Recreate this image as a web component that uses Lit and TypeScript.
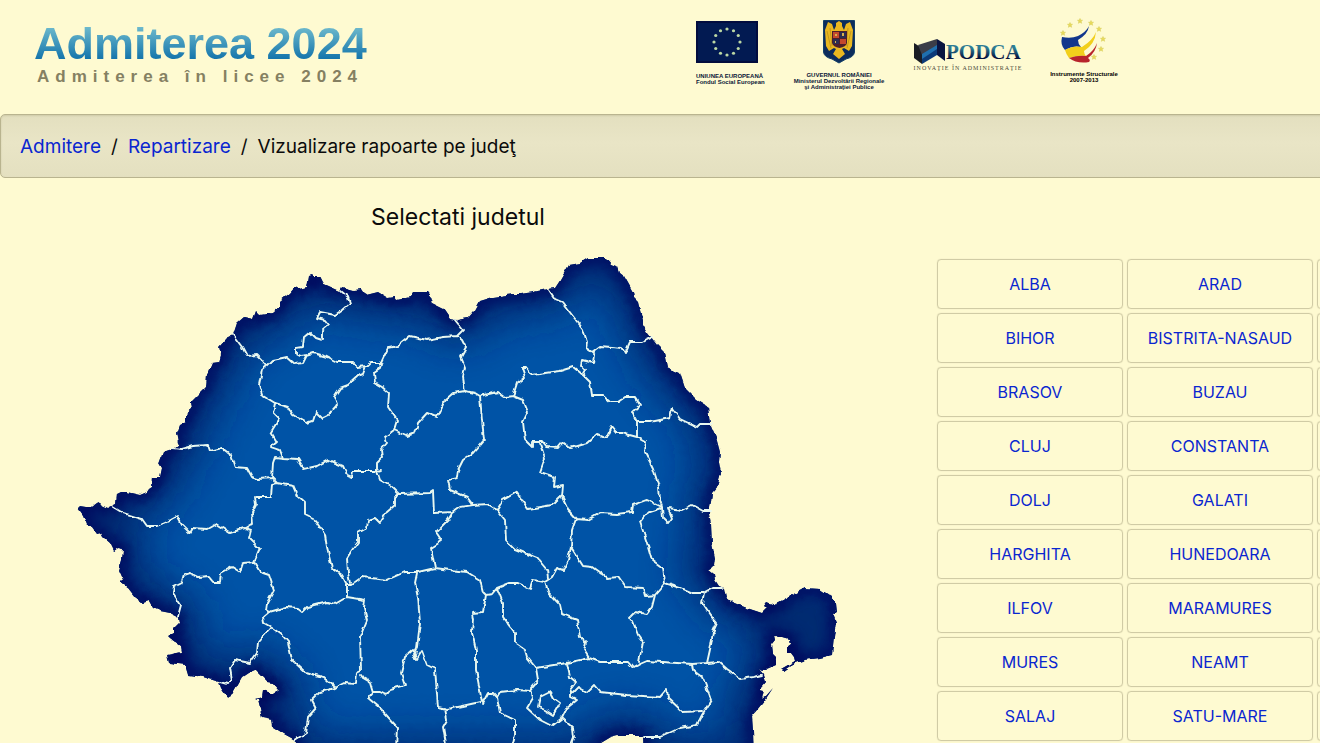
import { LitElement, html, css, svg } from "lit";
import { customElement } from "lit/decorators.js";

const COUNTIES: string[][] = [
  ["ALBA", "ARAD"],
  ["BIHOR", "BISTRITA-NASAUD"],
  ["BRASOV", "BUZAU"],
  ["CLUJ", "CONSTANTA"],
  ["DOLJ", "GALATI"],
  ["HARGHITA", "HUNEDOARA"],
  ["ILFOV", "MARAMURES"],
  ["MURES", "NEAMT"],
  ["SALAJ", "SATU-MARE"],
];

/* Country outline, clockwise from the western tip. */
const OUTLINE =
  "M78 508 80 506 86 507 92 507 96 504 98 503 103 506 108 508 112 506 116 504 117 494 121 492 127 492 131 493 140 495 147 492 149 489 152 487 153 477 160 477 162 468 159 463 163 452 172 449 179 443 177 433 180 425 186 422 186 415 192 410 191 402 200 393 206 387 207 375 212 363 219 362 221 355 219 347 227 338 233 335 237 323 244 317 253 319 256 311 260 315 273 313 280 307 280 301 290 293 295 287 299 289 307 287 309 275 312 274 315 277 319 277 322 283 340 291 342 287 353 290 362 289 366 295 378 292 388 298 395 297 397 300 410 297 413 292 427 292 431 297 433 304 443 309 450 319 457 320 468 318 475 310 480 301 493 297 513 294 520 294 533 292 547 289 555 288 559 282 563 275 569 265 580 263 588 258 607 258 612 264 617 266 619 272 624 276 628 283 633 292 634 298 638 302 640 310 643 320 643 325 647 332 651 337 657 345 664 352 667 367 673 370 680 373 685 388 697 400 708 407 710 423 716 437 720 452 719 462 721 473 717 487 712 493 711 503 709 513 711 523 712 543 715 558 714 566 709 569 714 573 715 580 719 586 724 588 726 597 732 602 747 608 762 613 767 608 764 606 767 602 777 606 779 602 790 596 805 588 820 589 832 597 836 603 837 612 833 614 836 622 834 637 832 655 820 658 805 660 793 664 783 671 781 669 795 661 794 657 791 653 787 653 787 647 791 644 790 639 783 637 777 637 774 635 775 640 771 645 772 653 777 658 776 665 762 671 759 669 764 675 766 682 760 689 764 690 762 699 766 696 773 688 765 700 757 710 752 716 753 730 754 760 644 760 643 737 635 735 627 735 618 735 610 737 600 743 596 760 302 760 295 740 284 734 273 727 272 719 262 717 258 700 255 699 262 697 263 690 273 694 279 690 273 683 267 682 255 670 248 673 242 677 230 698 227 697 221 688 219 682 203 677 188 675 185 665 169 663 167 655 182 652 181 646 170 638 168 636 174 633 174 628 179 623 178 617 170 613 160 611 153 608 149 601 143 603 135 597 128 588 120 582 123 579 119 570 122 560 123 549 118 548 114 551 110 543 103 537 101 533 97 534 92 527 87 525 83 515Z";

/* County boundaries drawn over the country shape. */
const BORDERS = [
  "233 335 242 347 247 356 257 355 262 360 267 366 273 360 287 357 295 364 303 363 307 355",
  "307 355 300 356 296 354 296 348 302 347 303 338 310 332 316 338 322 340 322 331 329 325 325 320 317 318 320 312 335 315 342 310 350 303 348 297 341 291",
  "307 355 313 353 327 357 337 362 352 362 357 367 367 366 370 363 381 363",
  "267 366 262 370 259 385 262 395 275 403 288 407 293 415 307 423 313 421 316 412 322 418 328 415 337 405 334 397 340 388 348 385 358 376 363 374 366 366",
  "275 403 273 413 279 419 271 432 277 442 271 447 280 450 283 458 298 459 304 469 317 466 328 460 343 466 347 475 352 477 353 471 377 471 381 470",
  "283 458 275 457 273 463 272 478",
  "172 448 182 449 193 446 208 445 210 451 222 448 231 455 235 467 247 468 252 477 258 479 272 478 277 483",
  "277 483 293 486 297 495 305 502 305 515 315 520 325 535 327 548 332 568 342 575 347 585 347 597",
  "277 483 272 484 271 497 255 497 256 505 252 513 253 523 245 528 251 530 249 538 260 549 254 562 260 572 269 575 274 590 267 603 266 610 269 612",
  "113 507 123 513 142 519 147 526 157 526 166 522 177 516 182 525 190 533 193 528 207 529 216 524 230 533 245 528",
  "254 562 243 563 240 572 232 567 221 573 220 582 213 582 208 576 198 577 190 573 184 575 182 582 174 586 173 593 181 605 178 616",
  "269 612 263 617 264 623 271 627 258 642 257 653 250 663 235 660 230 668 232 680 227 684 220 682",
  "271 627 282 635 288 642 292 660 305 672 323 677 335 688 320 692 312 700 316 708 308 717 306 733 295 740",
  "269 612 287 607 297 608 302 612 307 607 327 602 335 604 347 597 365 600 364 608 367 620 360 637 361 670 357 672 356 684 345 683 335 688",
  "361 675 363 678 370 682 373 692 380 692 386 695 390 689 405 685 401 673 405 657 413 650 415 658 417 652",
  "373 692 368 698 380 708 397 727 396 750",
  "417 573 415 583 418 597 420 623 417 647 413 655 417 659 422 651 427 665 435 669 438 707 447 709 462 706 480 702",
  "445 708 447 720 443 727 447 750",
  "347 585 351 585 362 577 387 580 405 572 418 572 435 568 450 570 467 572 480 580 483 592 486 595",
  "350 583 348 573 347 558 352 550 358 542 358 533 367 528 368 520 375 518 380 523 387 512 395 505 395 497 399 494",
  "377 471 380 480 392 487 399 494 430 493 433 491 434 513 453 512",
  "381 363 380 368 374 372 375 383 382 387 389 393 388 407 397 420 394 430 385 437 387 443 381 450 382 458 377 463 377 471",
  "381 363 388 348 398 346 410 336 427 340 443 337 457 336 463 330 455 320",
  "457 336 462 340 466 348 461 357 465 367 463 377 465 392",
  "394 430 407 436 415 433 418 423 427 413 437 417 445 400 453 393 465 391 475 393 480 396",
  "480 396 482 420 484 440 473 453 463 460 458 470 457 478 448 480 450 490 467 497 473 505",
  "480 396 493 393 498 392 505 397 513 396 517 383 525 377 522 368 527 368 532 375 560 371 573 367 583 375",
  "549 290 555 299 562 302 572 315 583 329 587 342 586 348 592 352 600 346 622 348 625 353 630 342 642 342 652 337",
  "592 352 595 355 594 363 582 360 581 365 586 370 583 375 590 382 592 395 602 395 610 402 618 402 625 397 635 397 640 405 632 412 637 422 637 437",
  "637 422 650 422 670 418 672 408 680 419 697 427 700 424 711 424",
  "637 437 622 433 617 433 612 427 607 438 597 434 587 443 570 448 563 442 558 448 547 447 543 442 532 442 532 447 525 440 523 422 528 412 523 400 513 396",
  "540 443 545 458 540 472 555 477 554 487 563 485 562 497 568 510 576 519",
  "637 437 646 442 645 452 653 468 659 487 660 500 662 507 663 518 668 523 672 518 668 508 682 510 692 505 703 511 711 511",
  "662 507 647 500 633 505 632 512 617 514 600 513 588 520 576 519",
  "662 508 647 513 640 522 647 543 652 560 663 568 665 583 680 588 692 593 704 593 713 588 722 588",
  "576 519 572 530 571 547 568 560 563 570 557 568 552 577 545 582 533 580 530 589 517 583 510 583 497 588 492 594 486 595",
  "571 547 576 555 583 566 592 567 607 578 618 577 625 587 643 588 645 596 655 595 665 583",
  "655 595 652 607 647 614 635 612 628 619 633 622 638 635 643 642 639 662",
  "545 582 548 592 560 605 562 614 577 620 580 637 586 642 584 650 589 658",
  "548 578 547 570 537 558 515 549 506 540 505 520 497 510 487 504 473 505 460 507 453 512 448 520 436 532 442 541 431 548 435 568",
  "497 510 503 500 517 492 528 509 552 505 562 495",
  "486 595 483 612 472 613 473 620 472 632 476 650 476 670 482 702",
  "497 588 503 603 503 617 515 633 515 643 525 650 527 657 536 668",
  "536 668 567 663 589 658 600 662 628 662 633 668 640 664 647 661 692 664 707 663 711 645 713 632 717 623 710 615 702 603 704 593",
  "707 663 718 662 727 670 740 679 753 677 762 675",
  "692 664 693 670 703 678 711 700 702 715 697 725 680 728 660 737 644 737",
  "567 663 570 677 576 682 570 690 572 693 578 687 587 692 594 685 600 692 627 695 660 697 667 689 668 698 683 712 702 711",
  "536 668 538 680 531 688 533 698 527 708 540 720 552 726 562 718 567 708 577 700 571 697 571 691",
  "540 697 550 692 553 698 560 703 553 715 545 710 538 707 540 697",
  "562 718 573 728 574 737 569 750",
  "531 691 517 690 500 692 497 697 493 693 488 693 482 704",
  "497 697 500 713 515 720 515 735 511 750",
];

const EU_STARS = Array.from({ length: 12 }, (_, i) => {
  const a = (i * Math.PI) / 6;
  return [31 + 13 * Math.sin(a), 21 - 13 * Math.cos(a)];
});

const STRUCT_STARS = [
  [4, 15], [11, 7], [21, 3], [32, 5], [40, 11], [44, 21], [42, 31], [35, 39],
];

@customElement("app-root")
export class AppRoot extends LitElement {
  static styles = css`
    :host {
      display: flex;
      flex-direction: column;
      height: 100vh;
      overflow: hidden;
      background: #fefad1;
      color: #0b0b0b;
      font-family: Inter, "Liberation Sans", sans-serif;
    }
    a {
      color: #0a26d0;
      text-decoration: none;
    }
    .header {
      display: grid;
      grid-template-columns: minmax(0, 174fr) minmax(0, 156fr);
      flex: none;
      height: 114px;
    }
    .brand {
      padding: 20px 0 0 34px;
      font-family: "Liberation Sans", Arial, sans-serif;
      font-weight: 700;
      white-space: nowrap;
    }
    .title {
      display: block;
      width: max-content;
      font-size: 45px;
      line-height: 48px;
      background: linear-gradient(#6db9cc 15%, #1676ac 80%);
      -webkit-background-clip: text;
      background-clip: text;
      color: transparent;
    }
    .subtitle {
      display: block;
      padding-left: 3px;
      font-size: 17px;
      line-height: 18px;
      letter-spacing: 6px;
      color: #858062;
    }
    .logos {
      display: flex;
      gap: 30px;
      padding-top: 18px;
    }
    .logo {
      display: flex;
      flex-direction: column;
      align-items: center;
      flex: none;
      margin: 0;
      font-family: "Liberation Sans", Arial, sans-serif;
      font-size: 6px;
      line-height: 6px;
      font-weight: 700;
      color: #0a1838;
      text-align: center;
      white-space: nowrap;
    }
    .logo svg {
      display: block;
    }
    .eu {
      width: 68px;
      align-items: flex-start;
      text-align: left;
      padding-top: 3px;
    }
    .eu figcaption {
      padding-top: 10px;
    }
    .gov {
      width: 90px;
    }
    .gov figcaption {
      padding-top: 8px;
    }
    .podca {
      width: 108px;
      padding-top: 20px;
    }
    .podca-word {
      font-family: "Liberation Serif", serif;
      font-size: 21px;
      font-weight: 700;
    }
    .podca figcaption {
      font-family: "Liberation Serif", serif;
      font-weight: 400;
      font-size: 6px;
      letter-spacing: 1px;
      color: #4a4a3c;
    }
    .struct {
      width: 64px;
      color: #000;
    }
    .struct figcaption {
      padding-top: 8px;
    }
    .crumbs {
      display: flex;
      align-items: center;
      flex: none;
      box-sizing: border-box;
      height: 64px;
      margin-right: -8px;
      padding: 2px 0 0 19px;
      border: 1px solid #b9b48f;
      border-radius: 5px;
      background: linear-gradient(#e3dfbf, #e9e5c6 45%, #e4e0c0);
      box-shadow: inset 0 1px 2px #cfcaa8;
      font-size: 19px;
      line-height: 28px;
      white-space: nowrap;
    }
    .crumbs ol {
      display: flex;
      gap: 10px;
      margin: 0;
      padding: 0;
      list-style: none;
    }
    .crumbs li {
      display: flex;
      gap: 10px;
    }
    .content {
      display: grid;
      grid-template-columns: minmax(0, 229fr) minmax(0, 101fr);
      flex: 1;
      min-height: 0;
    }
    .heading {
      margin: 0;
      padding: 23px 0 7px;
      font-size: 23px;
      line-height: 32px;
      font-weight: 400;
      text-align: center;
    }
    .map {
      display: block;
      width: 100%;
      height: auto;
    }
    .land {
      fill: #0053a6;
    }
    .edge-wide {
      fill: none;
      stroke: #002068;
      stroke-width: 42;
      opacity: 0.9;
    }
    .edge {
      fill: none;
      stroke: #000058;
      stroke-width: 10;
    }
    .borders {
      fill: none;
      stroke: #e8f8f0;
      stroke-width: 1.9;
      stroke-linejoin: round;
      stroke-linecap: round;
    }
    .counties {
      display: grid;
      grid-template-columns: repeat(3, 186px);
      grid-auto-rows: 50px;
      align-content: start;
      gap: 4px;
      margin: 0;
      padding: 81px 0 0 21px;
      overflow: hidden;
      list-style: none;
    }
    .cell {
      display: flex;
      align-items: center;
      justify-content: center;
      box-sizing: border-box;
      height: 50px;
      border: 1px solid #d0cba5;
      border-radius: 4px;
      box-shadow: 0 0 1px #d3cea8;
      font-size: 16px;
      line-height: 24px;
      white-space: nowrap;
    }
  `;

  private renderLogos() {
    return html`<div class="logos">
      <figure class="logo eu">
        <svg width="62" height="42" viewBox="0 0 62 42" aria-hidden="true">
          <rect width="62" height="42" fill="#021a52" />
          <rect x="1" y="1" width="60" height="40" fill="none" stroke="#020c3e" stroke-width="2" />
          ${EU_STARS.map(
            ([x, y]) => svg`<circle cx=${x} cy=${y} r="1.6" fill="#bcd8a4" />`
          )}
        </svg>
        <figcaption>UNIUNEA EUROPEANĂ<br />Fondul Social European</figcaption>
      </figure>
      <figure class="logo gov">
        <svg width="34" height="46" viewBox="0 0 34 46" aria-hidden="true">
          <path d="M1.500 2.500H32.500V34Q32 39 24 41L17 45 10 41Q2 39 1.500 34Z" fill="#0c2c5c" stroke="#123f68" />
          <path d="M14 5 17 3 20 5 20 8 22 12 24 6 28 4 31 12 30 28 27 33 22 30 20 31 23 36 17 41 11 36 14 31 12 30 7 33 4 28 3 12 6 4 10 6 12 12 14 8Z" fill="#eab820" />
          <path d="M5 13 9 30M8 10 10 28M29 13 25 30M26 10 24 28" stroke="#b08a1c" fill="none" stroke-width=".7" />
          <path d="M10 13H25V25Q24 29 17.500 30 11 29 10 25Z" fill="#4c1f2a" />
          <path d="M11 14H17V20H11ZM18 21H24V26H18Z" fill="#c4482c" />
          <path d="M18 14H24V20H18ZM11 21H17V26H11Z" fill="#2c2d50" />
          <path d="M13 16h2v2h-2ZM20 15h2v3h-2ZM13 23h1v2h-1Z" fill="#d8b04c" />
        </svg>
        <figcaption>GUVERNUL ROMÂNIEI<br />Ministerul Dezvoltării Regionale<br />şi Administraţiei Publice</figcaption>
      </figure>
      <figure class="logo podca">
        <svg width="108" height="27" viewBox="0 0 108 27" aria-hidden="true">
          <defs>
            <linearGradient id="pw" x1="0" x2="0" y1="0" y2="1">
              <stop offset="0.350" stop-color="#2c7c94" />
              <stop offset="0.750" stop-color="#04123e" />
            </linearGradient>
          </defs>
          <path d="M0 5 8 10V26L0 20Z" fill="#1a1c24" />
          <path d="M4 7 23 1V9L8 17Z" fill="#3b3d48" />
          <path d="M8 16 23 7V15L8 24Z" fill="#1f6fae" />
          <path d="M8 21 23 11V17L8 26Z" fill="#0c3a78" />
          <path d="M23 1 31 6V23L23 17Z" fill="#0a1440" />
          <text class="podca-word" x="32" y="21" fill="url(#pw)">PODCA</text>
        </svg>
        <figcaption>INOVAŢIE ÎN ADMINISTRAŢIE</figcaption>
      </figure>
      <figure class="logo struct">
        <svg width="50" height="45" viewBox="0 0 50 45" aria-hidden="true">
          <path d="M3 19Q12 21 19 18 27 14 30 8 29 16 19 22 19 26 22 29 14 27 6 32 1 27 3 19Z" fill="#12378c" />
          <path d="M6 32Q14 27 23 29 34 22 37 14 36 26 25 33 25 36 27 38 19 37 10 40 7 36 6 32Z" fill="#f2cf1c" />
          <path d="M10 40Q19 37 27 38 35 33 38 25 37 34 29 40 32 42 30 44 18 46 10 40Z" fill="#b8242c" />
          ${STRUCT_STARS.map(
            ([x, y]) => svg`<path transform="translate(${x} ${y})" d="M0-2.500.7-.8 2.500-.7 1.100.5 1.600 2.300 0 1.300-1.600 2.300-1.100.5-2.500-.7-.7-.8Z" fill="#e8da56" stroke="#d9cf5c" stroke-width=".6" />`
          )}
        </svg>
        <figcaption>Instrumente Structurale<br />2007-2013</figcaption>
      </figure>
    </div>`;
  }

  private renderMap() {
    return html`<svg class="map" viewBox="0 240 916 503" role="img" aria-labelledby="pick">
      <defs>
        <clipPath id="country"><path d=${OUTLINE} /></clipPath>
        <filter id="soft-wide" x="-20%" y="-20%" width="140%" height="140%">
          <feGaussianBlur stdDeviation="20" />
        </filter>
        <filter id="soft" x="-20%" y="-20%" width="140%" height="140%">
          <feGaussianBlur stdDeviation="7" />
        </filter>
        <filter id="rough" x="-2%" y="-2%" width="104%" height="104%" color-interpolation-filters="sRGB">
          <feTurbulence type="fractalNoise" baseFrequency="0.160" numOctaves="1" seed="4" result="n" />
          <feDisplacementMap in="SourceGraphic" in2="n" scale="5" xChannelSelector="R" yChannelSelector="G" />
        </filter>
      </defs>
      <g filter="url(#rough)">
        <g clip-path="url(#country)">
          <path class="land" d=${OUTLINE} />
          <path class="edge-wide" d=${OUTLINE} filter="url(#soft-wide)" />
          <path class="edge" d=${OUTLINE} filter="url(#soft)" />
        </g>
        <path class="borders" d=${BORDERS.map((b) => "M" + b).join("")} />
      </g>
    </svg>`;
  }

  render() {
    return html`
      <header class="header">
        <div class="brand">
          <span class="title">Admiterea 2024</span>
          <span class="subtitle">Admiterea în licee 2024</span>
        </div>
        ${this.renderLogos()}
      </header>
      <nav class="crumbs">
        <ol>
          <li><a href="#admitere">Admitere</a><span>/</span></li>
          <li><a href="#repartizare">Repartizare</a><span>/</span></li>
          <li>Vizualizare rapoarte pe judeţ</li>
        </ol>
      </nav>
      <main class="content">
        <section>
          <h1 class="heading" id="pick">Selectati judetul</h1>
          ${this.renderMap()}
        </section>
        <ul class="counties">
          ${COUNTIES.map(
            (row) => html`${row.map(
                (name) => html`<li><a class="cell" href="#${name}">${name}</a></li>`
              )}
              <li class="cell"></li>`
          )}
        </ul>
      </main>
    `;
  }
}
